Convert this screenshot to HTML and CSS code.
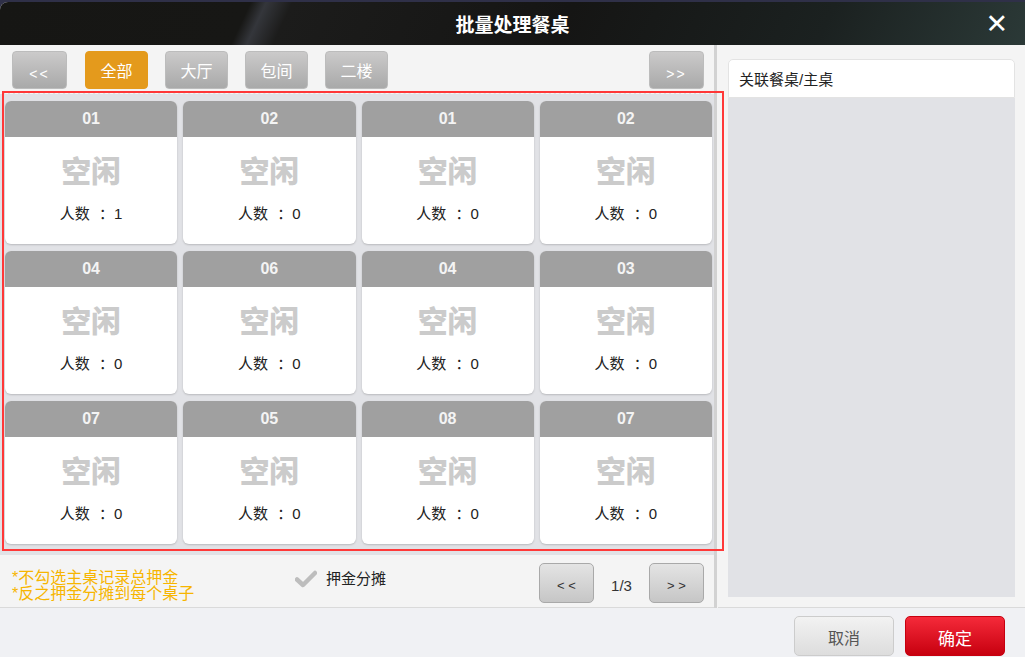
FILE: index.html
```html
<!DOCTYPE html>
<html lang="zh-CN">
<head>
    <meta charset="UTF-8">
    <meta name="viewport" content="width=device-width, initial-scale=1.0">
    <title>批量处理餐桌</title>
    <link rel="stylesheet" href="styles.css">
</head>
<body>
    <div class="dialog">
        <div class="dialog-header">
            <h2>批量处理餐桌</h2>
            <span class="close">&#x2715;</span>
        </div>
        <div class="dialog-main">
            <div class="left-panel">
                <div class="tabs">
                    <button class="tab-btn arrow">&lt;&lt;</button>
                    <button class="tab-btn active">全部</button>
                    <button class="tab-btn">大厅</button>
                    <button class="tab-btn">包间</button>
                    <button class="tab-btn">二楼</button>
                    <button class="tab-btn arrow push-right">&gt;&gt;</button>
                </div>
                <div class="table-grid">
                    <div class="card"><div class="card-no">01</div><div class="card-state">空闲</div><div class="card-people">人数 ：1</div></div>
                    <div class="card"><div class="card-no">02</div><div class="card-state">空闲</div><div class="card-people">人数 ：0</div></div>
                    <div class="card"><div class="card-no">01</div><div class="card-state">空闲</div><div class="card-people">人数 ：0</div></div>
                    <div class="card"><div class="card-no">02</div><div class="card-state">空闲</div><div class="card-people">人数 ：0</div></div>
                    <div class="card"><div class="card-no">04</div><div class="card-state">空闲</div><div class="card-people">人数 ：0</div></div>
                    <div class="card"><div class="card-no">06</div><div class="card-state">空闲</div><div class="card-people">人数 ：0</div></div>
                    <div class="card"><div class="card-no">04</div><div class="card-state">空闲</div><div class="card-people">人数 ：0</div></div>
                    <div class="card"><div class="card-no">03</div><div class="card-state">空闲</div><div class="card-people">人数 ：0</div></div>
                    <div class="card"><div class="card-no">07</div><div class="card-state">空闲</div><div class="card-people">人数 ：0</div></div>
                    <div class="card"><div class="card-no">05</div><div class="card-state">空闲</div><div class="card-people">人数 ：0</div></div>
                    <div class="card"><div class="card-no">08</div><div class="card-state">空闲</div><div class="card-people">人数 ：0</div></div>
                    <div class="card"><div class="card-no">07</div><div class="card-state">空闲</div><div class="card-people">人数 ：0</div></div>
                    <div class="highlight"></div>
                </div>
                <div class="left-bottom">
                    <div class="notes">
                        <div>*不勾选主桌记录总押金</div>
                        <div>*反之押金分摊到每个桌子</div>
                    </div>
                    <label class="split">
                        <svg width="22" height="18" viewBox="0 0 22 18"><path d="M2 9.5 L8 15 L20 3" fill="none" stroke="#bdbdbd" stroke-width="4.5" stroke-linecap="round" stroke-linejoin="round"/></svg>
                        <span>押金分摊</span>
                    </label>
                    <div class="pager">
                        <button class="page-btn">&lt; &lt;</button>
                        <span class="page-num">1/3</span>
                        <button class="page-btn">&gt; &gt;</button>
                    </div>
                </div>
            </div>
            <div class="divider"></div>
            <div class="right-panel">
                <div class="link-title">关联餐桌/主桌</div>
                <div class="link-list"></div>
            </div>
        </div>
        <div class="dialog-footer">
            <button class="btn-cancel">取消</button>
            <button class="btn-ok">确定</button>
        </div>
    </div>
</body>
</html>
```

FILE: styles.css
```css
body {
    margin: 0;
    font-family: "Liberation Sans", "Noto Sans CJK SC", sans-serif;
    background: #2f3048;
    width: 1025px;
    height: 657px;
    overflow: hidden;
}
.dialog {
    margin-top: 2px;
    height: 655px;
    display: flex;
    flex-direction: column;
    background: #f4f4f4;
    border-top-left-radius: 8px;
    overflow: hidden;
}
.dialog-header {
    height: 43px;
    flex: none;
    position: relative;
    display: flex;
    align-items: center;
    justify-content: center;
    background: linear-gradient(115deg, #161614 0%, #171715 24%, #34363b 25.5%, #1c1c1b 28%, #151514 55%, #1b2120 80%, #2b3937 100%);
}
.dialog-header h2 {
    margin: 0;
    color: white;
    font-size: 19px;
    font-weight: bold;
}
.close {
    position: absolute;
    right: 17px;
    top: 6px;
    color: white;
    font-family: "DejaVu Sans", sans-serif;
    font-size: 27px;
    font-weight: bold;
}
.dialog-main {
    flex: 1;
    display: flex;
    min-height: 0;
}
.left-panel {
    width: 714px;
    display: flex;
    flex-direction: column;
}
.tabs {
    height: 48px;
    flex: none;
    display: flex;
    align-items: flex-start;
    gap: 17px;
    padding: 6px 10px 0 12px;
    box-sizing: border-box;
}
.tab-btn {
    width: 63px;
    height: 38px;
    border: 1px solid #bcbcbc;
    border-radius: 4px;
    background: linear-gradient(#cbcaca, #a9a9a9);
    color: white;
    font-family: "Liberation Sans", "Noto Sans CJK SC", sans-serif;
    font-size: 16px;
    padding: 0;
}
.tab-btn.arrow {
    width: 55px;
    font-size: 14px;
    letter-spacing: 2px;
    padding-top: 7px;
}
.tab-btn.active {
    background: #e49a1c;
    border-color: #e49a1c;
    margin-left: 1px;
}
.push-right {
    margin-left: auto;
}
.table-grid {
    position: relative;
    height: 462px;
    flex: none;
    box-sizing: border-box;
    padding: 7px 2px 0 5px;
    background: #e1e2e6;
    border-top: 1px dashed #f6f6f6;
    display: grid;
    grid-template-columns: repeat(4, 1fr);
    grid-template-rows: repeat(3, 143px);
    column-gap: 6px;
    row-gap: 7px;
    align-content: start;
}
.card {
    background: white;
    border-radius: 6px;
    box-shadow: 0 1px 2px rgba(0, 0, 0, 0.18);
    display: flex;
    flex-direction: column;
    align-items: center;
    overflow: hidden;
}
.card-no {
    width: 100%;
    height: 36px;
    line-height: 36px;
    text-align: center;
    background: #a0a0a0;
    color: #f4f4f4;
    font-size: 16px;
    font-weight: bold;
}
.card-state {
    margin-top: 13px;
    font-family: "Noto Sans CJK SC", sans-serif;
    font-size: 30px;
    font-weight: 900;
    color: #cbcbcb;
    line-height: 38px;
}
.card-people {
    margin-top: 14px;
    font-size: 15px;
    word-spacing: 5px;
    color: #222;
}
.highlight {
    position: absolute;
    left: 2px;
    top: -3px;
    width: 718px;
    height: 456px;
    border: 2px solid #ff3838;
    pointer-events: none;
}
.left-bottom {
    flex: 1;
    display: flex;
    align-items: flex-start;
    padding: 14px 10px 0 12px;
    border-bottom: 1px solid #dadada;
}
.notes {
    width: 280px;
    color: #f7b500;
    font-size: 16px;
    line-height: 16px;
    margin-top: 1px;
}
.split {
    display: flex;
    align-items: center;
    gap: 9px;
    margin-left: 3px;
    font-size: 15px;
    color: #222;
}
.split span {
    margin-top: -2px;
}
.pager {
    margin-left: auto;
    margin-top: -6px;
    display: flex;
    align-items: center;
}
.page-btn {
    width: 55px;
    height: 40px;
    border: 1px solid #a9a9a9;
    border-radius: 5px;
    background: linear-gradient(#e4e4e4, #c6c6c6);
    color: #333;
    font-size: 13px;
    padding-top: 6px;
}
.page-num {
    width: 55px;
    text-align: center;
    font-size: 15px;
    color: #333;
    padding-top: 4px;
}
.divider {
    width: 3px;
    background: #d2d2d2;
    margin-right: 1px;
}
.right-panel {
    flex: 1;
    padding: 14px 10px 10px 10px;
    display: flex;
    flex-direction: column;
    border-bottom: 1px solid #dadada;
}
.link-title {
    height: 37px;
    line-height: 40px;
    background: white;
    border: 1px solid #e3e3e3;
    border-radius: 5px 5px 0 0;
    padding-left: 10px;
    font-size: 15px;
    color: #222;
}
.link-list {
    flex: 1;
    background: #e1e2e6;
}
.dialog-footer {
    height: 49px;
    flex: none;
    background: #f0f1f4;
    display: flex;
    align-items: flex-start;
    justify-content: flex-end;
    gap: 11px;
    padding: 8px 20px 0 0;
    box-sizing: border-box;
}
.dialog-footer button {
    width: 100px;
    height: 40px;
    border-radius: 5px;
    font-family: "Liberation Sans", "Noto Sans CJK SC", sans-serif;
    font-size: 16px;
    padding: 2px 0 0;
}
.btn-cancel {
    background: linear-gradient(#f2f2f2, #dddddd);
    border: 1px solid #cccccc;
    color: #555;
}
.btn-ok {
    background: linear-gradient(#f52a3a, #c7000f);
    border: 1px solid #c7000f;
    color: white;
    font-size: 17px !important;
}
```
